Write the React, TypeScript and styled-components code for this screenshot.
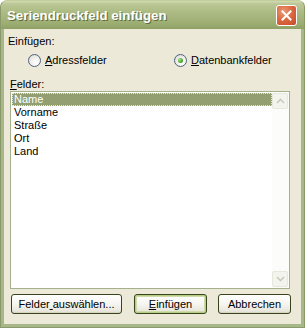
import React from "react";
import styled, { createGlobalStyle } from "styled-components";

const Global = createGlobalStyle`
  html, body { margin: 0; padding: 0; background: #ffffff; }
  body { font-family: "Liberation Sans", Arial, sans-serif; }
  * { box-sizing: border-box; }
`;

const Window = styled.div`
  width: 305px;
  height: 328px;
  display: flex;
  flex-direction: column;
  border-radius: 7px 7px 0 0;
  overflow: hidden;
  background: #a8b78a;
  border: 1px solid #8a9a6a;
  border-top-color: #c2cd9c;
`;

const TitleBar = styled.div`
  height: 28px;
  flex: none;
  display: flex;
  align-items: center;
  justify-content: space-between;
  padding: 0 6px 0 6px;
  background: linear-gradient(
    to bottom,
    #d3dcb0 0%,
    #bcc797 10%,
    #aebd86 35%,
    #a5b47b 60%,
    #9aab70 85%,
    #8fa066 100%
  );
`;

const Title = styled.span`
  color: #ffffff;
  font-family: "Liberation Sans", Arial, sans-serif;
  font-weight: bold;
  font-size: 13.3px;
  text-shadow: 1px 1px 0 #5d6b3c;
  padding-top: 1px;
`;

const CloseButton = styled.div`
  width: 21px;
  height: 21px;
  border-radius: 3px;
  border: 1px solid #ffffff;
  background: radial-gradient(circle at 35% 30%, #eb9a78 0%, #dc6a42 45%, #c5492a 100%);
  display: flex;
  align-items: center;
  justify-content: center;
  margin-top: 1px;
  margin-right: 1px;
`;

const Body = styled.div`
  flex: 1;
  margin: 0 3px 3px 3px;
  background: #ece9d8;
  padding: 6px 7px 10px 4px;
  display: flex;
  flex-direction: column;
  font-size: 11px;
  color: #000;
`;

const Label = styled.div`
  height: 13px;
  line-height: 13px;
`;

const RadioRow = styled.div`
  display: flex;
  align-items: center;
  height: 14px;
  margin-top: 5px;
  padding-left: 20px;
`;

const RadioOption = styled.label<{ $width: number }>`
  display: flex;
  align-items: center;
  gap: 4px;
  width: ${(p) => p.$width}px;
  line-height: 13px;
`;

const RadioCircle = styled.span<{ $checked?: boolean }>`
  width: 13px;
  height: 13px;
  border-radius: 50%;
  border: 1px solid #4d6185;
  background: radial-gradient(circle at 65% 70%, #ffffff 0%, #f4f3ee 40%, #d5d4cc 100%);
  display: flex;
  align-items: center;
  justify-content: center;
  flex: none;
  &::after {
    content: "";
    display: ${(p) => (p.$checked ? "block" : "none")};
    width: 5px;
    height: 5px;
    border-radius: 50%;
    background: radial-gradient(circle at 35% 35%, #a6e08a 0%, #4ca62e 60%, #2f7e1a 100%);
  }
`;

const U = styled.span`
  text-decoration: underline;
  text-underline-offset: 1px;
`;

const FieldsLabel = styled(Label)`
  margin-top: 11px;
  padding-left: 2px;
`;

const ListBox = styled.div`
  margin: 0 0 0 2px;
  height: 198px;
  width: 280px;
  border: 1px solid #a5b08e;
  background: #ffffff;
  display: flex;
`;

const Items = styled.div`
  flex: 1;
  padding: 1px 0 0 1px;
`;

const Item = styled.div<{ $selected?: boolean }>`
  height: 13px;
  line-height: 13px;
  padding-left: 2px;
  background: ${(p) => (p.$selected ? "#939f71" : "transparent")};
  color: ${(p) => (p.$selected ? "#ffffff" : "#000000")};
  outline: ${(p) => (p.$selected ? "1px dotted #e6e9d8" : "none")};
  outline-offset: -1px;
`;

const ScrollBar = styled.div`
  width: 17px;
  flex: none;
  background: #fcfcfa;
  display: flex;
  flex-direction: column;
  justify-content: space-between;
  padding: 1px 1px 1px 0;
`;

const ScrollButton = styled.div`
  height: 16px;
  border: 1px solid #e6e8dc;
  border-radius: 2px;
  background: #f4f4ef;
  display: flex;
  align-items: center;
  justify-content: center;
`;

const ButtonRow = styled.div`
  display: flex;
  margin-top: 5px;
  padding-left: 3px;
`;

const Button = styled.div<{ $width: number; $gap?: number; $default?: boolean }>`
  width: ${(p) => p.$width}px;
  height: 20px;
  margin-left: ${(p) => p.$gap ?? 0}px;
  border: 1px solid #37441e;
  border-radius: 3px;
  background: linear-gradient(to bottom, #ffffff 0%, #f6f5f0 50%, #e8e6dc 90%, #d9d6c8 100%);
  box-shadow: ${(p) =>
    p.$default
      ? "inset 0 0 0 1px #b7cc85, inset 0 0 0 2px #cfdca8"
      : "inset 0 -1px 0 #d6d3c2"};
  display: flex;
  align-items: center;
  justify-content: center;
  font-size: 11px;
  line-height: 13px;
`;

export default function App() {
  return (
    <>
      <Global />
      <Window>
        <TitleBar>
          <Title>Seriendruckfeld einfügen</Title>
          <CloseButton>
            <svg width="11" height="11" viewBox="0 0 11 11">
              <path d="M1.5 1.5 L9.5 9.5 M9.5 1.5 L1.5 9.5" stroke="#ffffff" strokeWidth="2" strokeLinecap="square" />
            </svg>
          </CloseButton>
        </TitleBar>
        <Body>
          <Label>Einfügen:</Label>
          <RadioRow>
            <RadioOption $width={146}>
              <RadioCircle />
              <span>
                <U>A</U>dressfelder
              </span>
            </RadioOption>
            <RadioOption $width={120}>
              <RadioCircle $checked />
              <span>
                <U>D</U>atenbankfelder
              </span>
            </RadioOption>
          </RadioRow>
          <FieldsLabel>
            <U>F</U>elder:
          </FieldsLabel>
          <ListBox>
            <Items>
              <Item $selected>Name</Item>
              <Item>Vorname</Item>
              <Item>Straße</Item>
              <Item>Ort</Item>
              <Item>Land</Item>
            </Items>
            <ScrollBar>
              <ScrollButton>
                <svg width="9" height="6" viewBox="0 0 9 6">
                  <path d="M1 5 L4.5 1.5 L8 5" stroke="#c9cbbd" strokeWidth="1.6" fill="none" />
                </svg>
              </ScrollButton>
              <ScrollButton>
                <svg width="9" height="6" viewBox="0 0 9 6">
                  <path d="M1 1 L4.5 4.5 L8 1" stroke="#c9cbbd" strokeWidth="1.6" fill="none" />
                </svg>
              </ScrollButton>
            </ScrollBar>
          </ListBox>
          <ButtonRow>
            <Button $width={111}>
              Felder<U>&nbsp;</U>auswählen...
            </Button>
            <Button $width={73} $gap={12} $default>
              <span>
                <U>E</U>infügen
              </span>
            </Button>
            <Button $width={73} $gap={11}>
              Abbrechen
            </Button>
          </ButtonRow>
        </Body>
      </Window>
    </>
  );
}
